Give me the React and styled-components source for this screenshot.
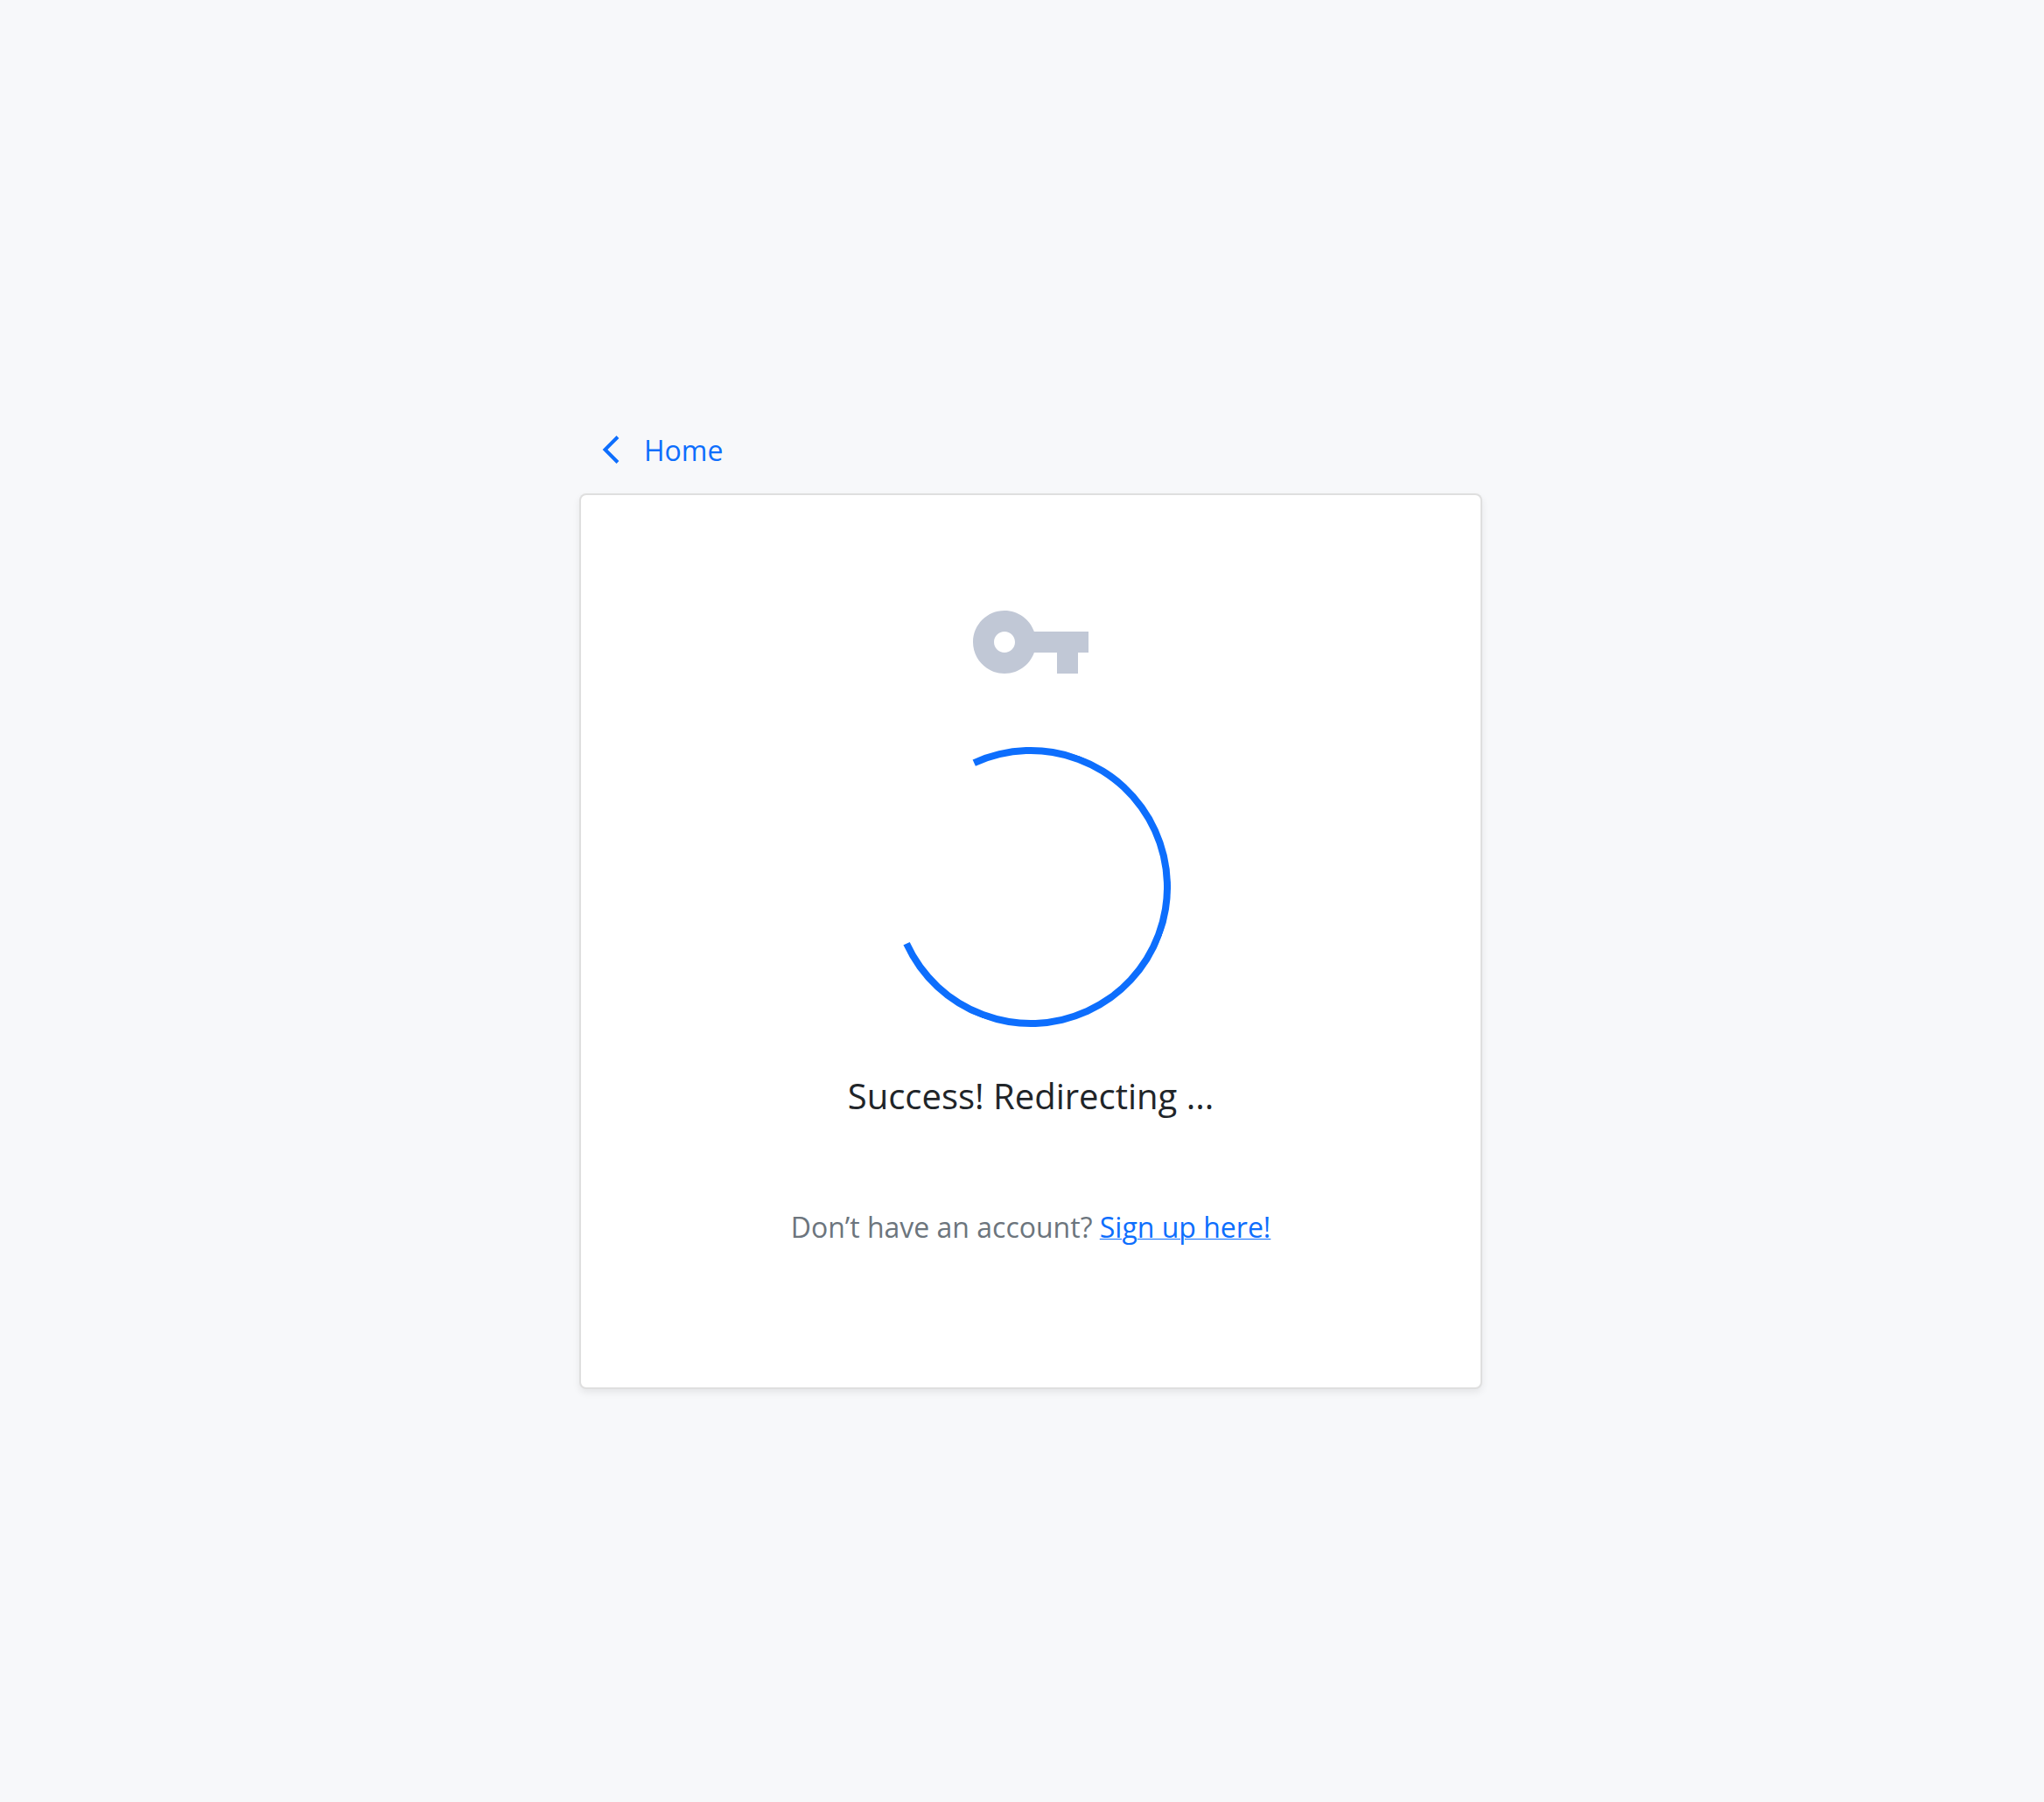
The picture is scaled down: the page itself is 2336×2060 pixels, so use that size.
import React from "react";
import styled, { createGlobalStyle } from "styled-components";

const GlobalStyle = createGlobalStyle`
  * { box-sizing: border-box; }
  body {
    margin: 0;
    background: #f7f8fa;
    color: #212529;
    font-family: "Open Sans", "Noto Sans", sans-serif;
    font-size: 32px;
    line-height: 48px;
  }
`;

const Page = styled.main`
  min-height: 100vh;
  display: flex;
  align-items: center;
  justify-content: center;
  padding-left: 20px;
`;

const Column = styled.div`
  width: 100%;
  max-width: 1032px;
`;

const Nav = styled.nav`
  display: flex;
  padding: 19px 26px 25px;
`;

const BackLink = styled.a`
  display: flex;
  align-items: center;
  gap: 28px;
  color: #0d6efd;
  text-decoration: none;
`;

const Chevron = styled.svg`
  width: 20px;
  height: 34px;
  fill: none;
  stroke: currentColor;
  stroke-width: 4;
`;

const Card = styled.section`
  display: flex;
  flex-direction: column;
  align-items: center;
  padding: 96px 96px 159px;
  background: #fff;
  border: 2px solid rgba(0, 0, 0, 0.125);
  border-radius: 8px;
  box-shadow: 0 4px 8px rgba(0, 0, 0, 0.075);
`;

const KeyIcon = styled.svg`
  width: 144px;
  height: 144px;
  fill: #c1c8d6;
`;

const Spinner = styled.div`
  width: 320px;
  height: 320px;
  margin-top: 48px;
  border: 8px solid #0d6efd;
  border-left-color: transparent;
  border-radius: 50%;
  transform: rotate(20.5deg);
`;

const Status = styled.h1`
  margin: 55px 0 102px;
  font-size: 40px;
  font-weight: 400;
  line-height: 48px;
  text-align: center;
`;

const Prompt = styled.p`
  margin: 0;
  color: #6c757d;
  text-align: center;
`;

const SignUpLink = styled.a`
  color: #0d6efd;
  text-decoration: underline;
  text-decoration-thickness: 1px;
`;

export default function App() {
  return (
    <>
      <GlobalStyle />
      <Page>
        <Column>
          <Nav>
            <BackLink href="#home">
              <Chevron viewBox="0 0 20 34" aria-hidden="true">
                <path d="M18 1.5 3.5 16 18 30.5" />
              </Chevron>
              Home
            </BackLink>
          </Nav>
          <Card>
            <KeyIcon viewBox="0 0 24 24" aria-hidden="true">
              <path d="M12.65 10C11.83 7.67 9.61 6 7 6c-3.31 0-6 2.69-6 6s2.69 6 6 6c2.61 0 4.83-1.67 5.65-4H17v4h4v-4h2v-4H12.65zM7 14c-1.1 0-2-.9-2-2s.9-2 2-2 2 .9 2 2-.9 2-2 2z" />
            </KeyIcon>
            <Spinner role="status" aria-label="Loading" />
            <Status>Success! Redirecting ...</Status>
            <Prompt>
              Don’t have an account? <SignUpLink href="#signup">Sign up here!</SignUpLink>
            </Prompt>
          </Card>
        </Column>
      </Page>
    </>
  );
}
